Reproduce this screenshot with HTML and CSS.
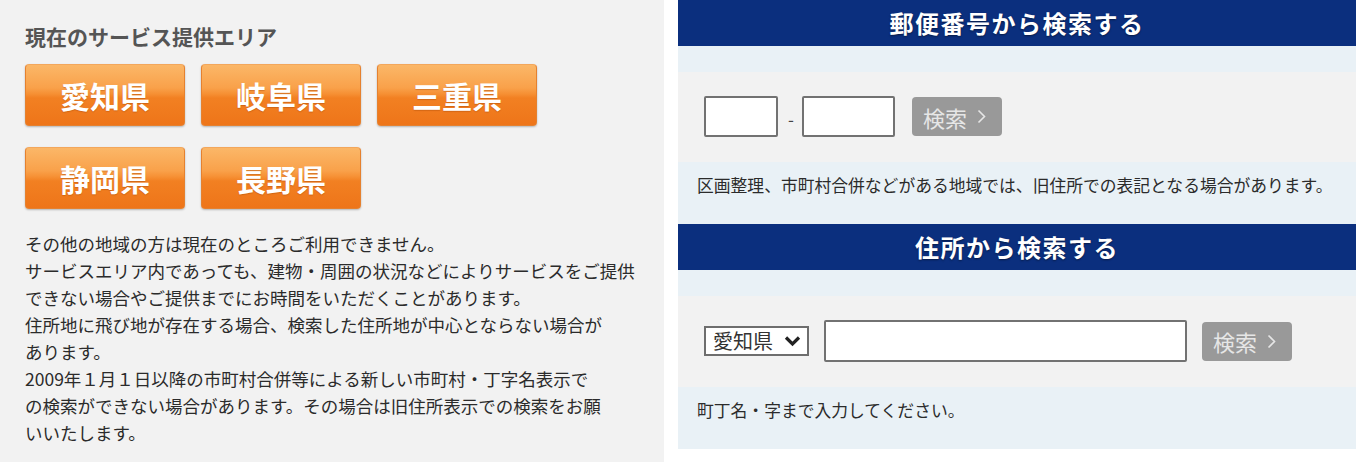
FILE: index.html
```html
<!DOCTYPE html>
<html lang="ja">
<head>
  <meta charset="UTF-8">
  <meta name="viewport" content="width=device-width, initial-scale=1.0">
  <title>サービス提供エリア検索</title>
  <link rel="stylesheet" href="styles.css">
</head>
<body>
  <div class="page">
    <div class="area">
      <h2 class="area-title">現在のサービス提供エリア</h2>

      <div class="pref-list">
        <a class="pref" href="#">愛知県</a>
        <a class="pref" href="#">岐阜県</a>
        <a class="pref" href="#">三重県</a>
        <a class="pref" href="#">静岡県</a>
        <a class="pref" href="#">長野県</a>
      </div>

      <p class="area-note">その他の地域の方は現在のところご利用できません。<br>サービスエリア内であっても、建物・周囲の状況などによりサービスをご提供<br>できない場合やご提供までにお時間をいただくことがあります。<br>住所地に飛び地が存在する場合、検索した住所地が中心とならない場合が<br>あります。<br>2009年１月１日以降の市町村合併等による新しい市町村・丁字名表示で<br>の検索ができない場合があります。その場合は旧住所表示での検索をお願<br>いいたします。</p>
    </div>

    <div class="search">
      <h3 class="search-head">郵便番号から検索する</h3>
      <div class="band"></div>
      <form class="search-form">
        <input class="zip zip-1" type="text" maxlength="3">
        <span class="dash">-</span>
        <input class="zip zip-2" type="text" maxlength="4">
        <button class="search-btn" type="button">検索
          <svg width="9" height="15" viewBox="0 0 9 15"><polyline points="1.5,1.5 7.5,7.5 1.5,13.5" fill="none" stroke="#e6e6e6" stroke-width="1.6"/></svg>
        </button>
      </form>
      <p class="search-note">区画整理、市町村合併などがある地域では、旧住所での表記となる場合があります。</p>

      <h3 class="search-head">住所から検索する</h3>
      <div class="band"></div>
      <form class="search-form">
        <label class="pref-select">
          <select>
            <option>愛知県</option>
            <option>岐阜県</option>
            <option>三重県</option>
            <option>静岡県</option>
            <option>長野県</option>
          </select>
          <svg class="chevron" width="17" height="12" viewBox="0 0 17 12"><polyline points="2,2.5 8.5,9 15,2.5" fill="none" stroke="#222" stroke-width="3.2"/></svg>
        </label>
        <input class="address" type="text">
        <button class="search-btn" type="button">検索
          <svg width="9" height="15" viewBox="0 0 9 15"><polyline points="1.5,1.5 7.5,7.5 1.5,13.5" fill="none" stroke="#e6e6e6" stroke-width="1.6"/></svg>
        </button>
      </form>
      <p class="search-note">町丁名・字まで入力してください。</p>
    </div>
  </div>
</body>
</html>
```

FILE: styles.css
```css
body {
  margin: 0;
  background-color: #fff;
  font-family: "Noto Sans CJK JP", "Noto Sans", sans-serif;
  color: #333;
}

.page {
  display: flex;
  height: 462px;
}

/* left: service area */

.area {
  width: 664px;
  flex-shrink: 0;
  box-sizing: border-box;
  padding: 24px 25px 0;
  background-color: #f2f2f2;
}

.area-title {
  margin: 0 0 16px;
  font-size: 21px;
  line-height: 24px;
  font-weight: bold;
  color: #555;
}

.pref-list {
  display: grid;
  grid-template-columns: repeat(3, 160px);
  column-gap: 16px;
  row-gap: 21px;
}

.pref {
  display: flex;
  align-items: center;
  justify-content: center;
  height: 62px;
  box-sizing: border-box;
  border: 1px solid #e5812f;
  border-top-color: #f3a75c;
  border-radius: 4px;
  background: linear-gradient(to bottom, #fbb768 0%, #f9a14a 38%, #f69034 48%, #f28022 55%, #ee7519 100%);
  box-shadow: 0 1px 2px rgba(0, 0, 0, 0.25);
  color: #fff;
  font-size: 30px;
  font-weight: bold;
  text-decoration: none;
  text-shadow: 0 1px 1px rgba(150, 60, 0, 0.35);
}

.area-note {
  margin: 21px 0 0;
  font-size: 17.5px;
  line-height: 27px;
  white-space: nowrap;
  color: #2b2b2b;
}

/* right: search */

.search {
  flex: 1;
  margin-left: 14px;
}

.search-head {
  margin: 0;
  height: 46px;
  line-height: 46px;
  background-color: #0b2f7e;
  color: #fff;
  text-align: center;
  font-size: 24px;
  font-weight: bold;
  letter-spacing: 1.5px;
  text-shadow: 0 1px 2px rgba(0, 0, 0, 0.45);
}

.band {
  height: 26px;
  background-color: #e9f1f6;
}

.search-form {
  display: flex;
  align-items: center;
  margin: 0;
  padding: 24px 26px 25px;
  background-color: #f2f2f2;
}

.zip,
.address {
  box-sizing: border-box;
  height: 41px;
  border: 2px solid #727272;
  border-radius: 2px;
  background-color: #fff;
  font-size: 18px;
  padding: 0 6px;
}

.zip-1 {
  width: 74px;
}

.zip-2 {
  width: 93px;
}

.dash {
  margin: 0 8px 0 10px;
  font-size: 17px;
  color: #444;
  line-height: 1;
  padding-top: 4px;
}

.address {
  width: 363px;
  height: 42px;
  margin-right: 15px;
}

.search-btn {
  display: flex;
  align-items: center;
  gap: 10px;
  width: 90px;
  height: 39px;
  margin-left: 17px;
  padding: 0 0 0 11px;
  border: none;
  border-radius: 4px;
  background-color: #999;
  color: #e6e6e6;
  font-family: inherit;
  font-size: 22px;
  cursor: pointer;
}

.address + .search-btn {
  margin-left: 0;
}

.pref-select {
  position: relative;
  margin-right: 15px;
}

.pref-select select {
  appearance: none;
  -webkit-appearance: none;
  box-sizing: border-box;
  width: 105px;
  height: 30px;
  padding: 0 0 0 7px;
  border: 2px solid #6e6e6e;
  border-radius: 0;
  background-color: #fff;
  color: #333;
  font-family: inherit;
  font-size: 20px;
  line-height: 26px;
}

.pref-select .chevron {
  position: absolute;
  right: 8px;
  top: 9px;
  pointer-events: none;
}

.search-note {
  margin: 0;
  height: 62px;
  box-sizing: border-box;
  padding: 12px 0 0 19px;
  background-color: #e9f1f6;
  font-size: 16.8px;
  line-height: 22px;
  color: #2b2b2b;
}
```
